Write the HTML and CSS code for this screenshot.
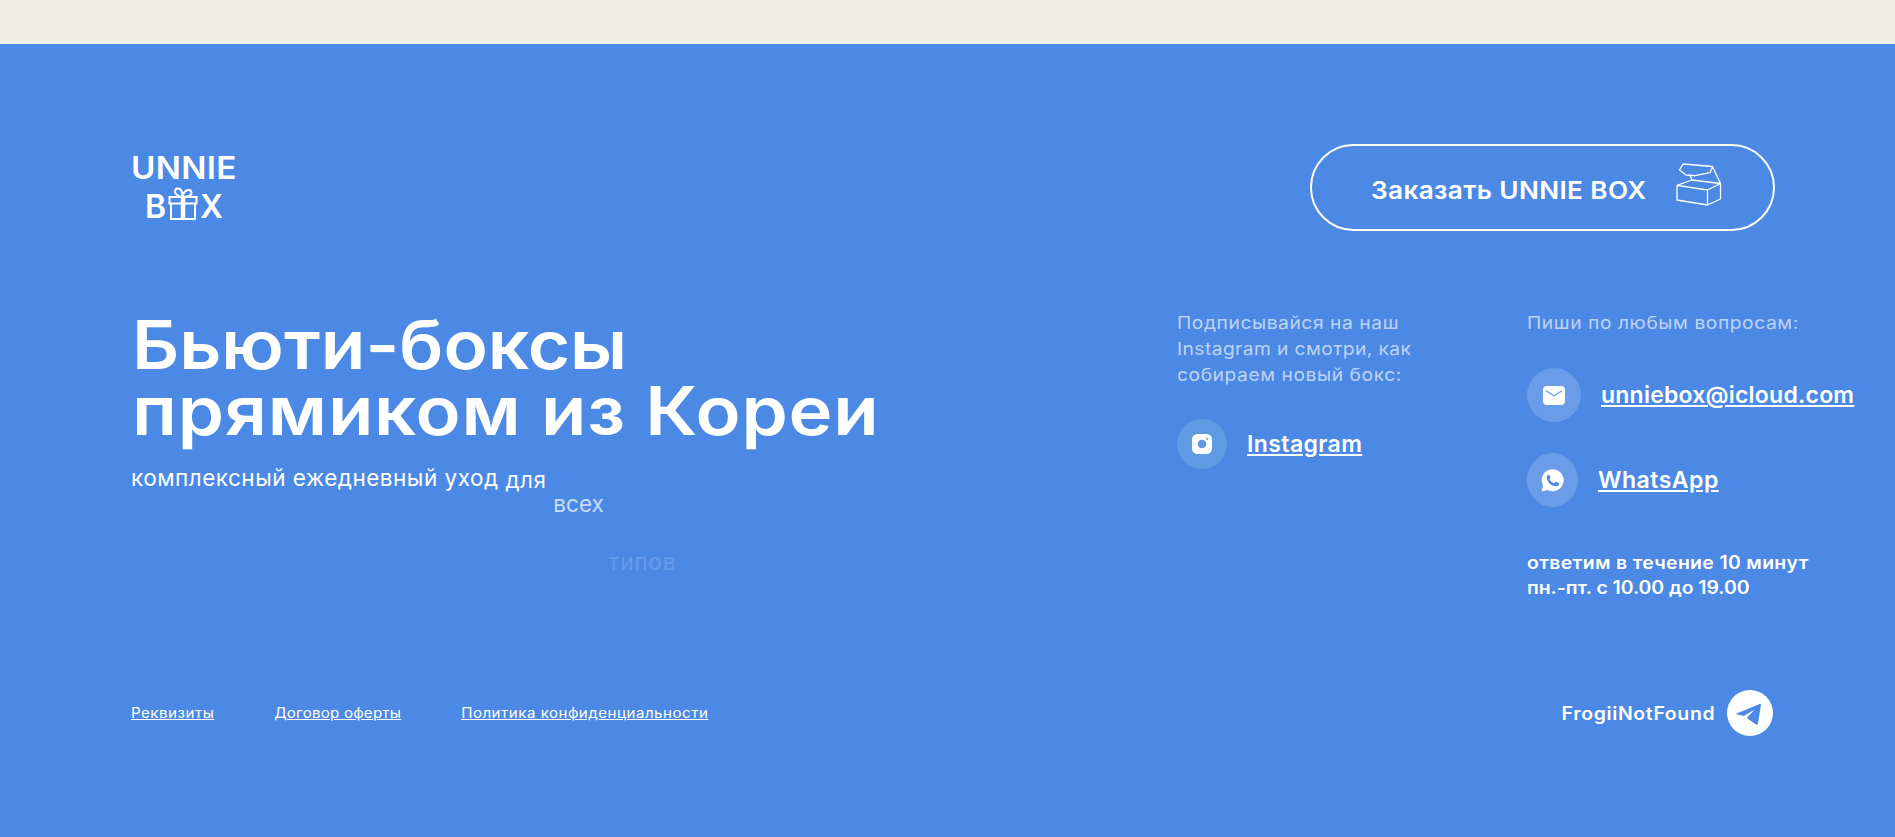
FILE: index.html
```html
<!DOCTYPE html>
<html lang="ru">
  <head>
    <meta charset="utf-8">
    <title>UNNIE BOX</title>
    <link rel="stylesheet" href="styles.css">
  </head>
  <body>
    <footer class="footer">
      <div class="top">
        <div class="logo">
          <div class="logo-line">UNNIE</div>
          <div class="logo-line logo-box">
            <span>B</span>
            <svg width="30" height="34" viewBox="0 0 30 34" fill="none" stroke="#fff" stroke-width="2">
              <path d="M1.500 10h27v6.500h-27zM3 16.500v15.500h24v-15.500"/>
              <path d="M15 10v22" stroke-width="4.500"/>
              <path d="M14.500 10C10 9 6.500 7 7 4c.5-3.500 5-3.300 6.500 0 .9 2 1 4 1 6zM14.500 10c.8-3.800 3-7 6-7 3.800 0 3.800 4.800.8 6-1.800.8-4.300 1-6.800 1z"/>
            </svg>
            <span>X</span>
          </div>
        </div>
        <a class="order" href="#">
          <span>Заказать UNNIE BOX</span>
          <svg width="46" height="44" viewBox="0 0 46 44" fill="none" stroke="#fff" stroke-width="1.300" stroke-linejoin="round">
            <path d="M1 23.300L31.500 28v15L1 38zM31.500 28L44.500 21.500v15.500L31.500 43M1 23.300L16 18l28.500 3.500L36.500 4.500 7 2 3.500 8 10 13l9 .7 15-3 2.500-6.200M14 13.500l2 4.500"/>
          </svg>
        </a>
      </div>

      <div class="middle">
        <div class="about">
          <h2><span class="title-1">Бьюти-боксы</span><br><span class="title-2">прямиком из Кореи</span></h2>
          <p class="lead">
            комплексный ежедневный уход
            <span class="word word-1">для</span>
            <span class="word word-2">всех</span>
            <span class="word word-3">типов</span>
          </p>
        </div>
        <div class="social">
          <p class="note">Подписывайся на наш<br><span class="tight">Instagram и смотри, как</span><br>собираем новый бокс:</p>
          <div class="contact contact-inst">
            <span class="circle">
              <svg width="20" height="20" viewBox="0 0 20 20">
                <rect width="20" height="20" rx="5.500" fill="#fff"/>
                <circle cx="10" cy="10" r="4.300" fill="#5f9be3"/>
                <circle cx="15.200" cy="4.800" r="1" fill="#5f9be3"/>
              </svg>
            </span>
            <a href="#">Instagram</a>
          </div>
        </div>
        <div class="write">
          <p class="note">Пиши по любым вопросам:</p>
          <div class="contact contact-mail">
            <span class="circle">
              <svg width="22" height="19" viewBox="0 0 22 19">
                <rect width="22" height="19" rx="4" fill="#fff"/>
                <path d="M3 4.800l8 5 8-5" fill="none" stroke="#6a9ce9" stroke-width="1.100"/>
              </svg>
            </span>
            <a href="#">unniebox@icloud.com</a>
          </div>
          <div class="contact contact-wa">
            <span class="circle">
              <svg width="23" height="23" viewBox="0 0 23 23">
                <path d="M.5 22.500l1.600-5.800A11 11 0 1 1 6.600 21z" fill="#fff"/>
                <path d="M7.600 5.700c-1.200.3-2 1.500-1.900 3 .5 4.300 4.300 8 8.600 8.600 1.800.2 3.700-.7 3.900-2.400l-.2-.7-3-1.400-.8.200-1.200 1.400c-2.200-.8-3.800-2.300-4.700-4.300l1.200-1.500-1.200-2.700z" fill="#4b89e4"/>
              </svg>
            </span>
            <a href="#">WhatsApp</a>
          </div>
          <p class="hours">ответим в течение 10 минут<br><span class="tight">пн.-пт. с 10.00 до 19.00</span></p>
        </div>
      </div>

      <div class="bottom">
        <nav class="docs">
          <a href="#">Реквизиты</a>
          <a class="tight" href="#">Договор оферты</a>
          <a href="#">Политика конфиденциальности</a>
        </nav>
        <a class="author" href="#">
          <span>FrogiiNotFound</span>
          <svg width="46" height="46" viewBox="0 0 46 46">
            <circle cx="23" cy="23" r="23" fill="#fff"/>
            <path d="M8.500 24L32.500 14c1-.4 1.600.2 1.400 1.200L31 33.500c-.2 1.400-1.200 1.500-2.300.8l-9-6.300 8-8.500-11 6.500z" fill="#4b89e4"/>
          </svg>
        </a>
      </div>
    </footer>
  </body>
</html>
```
FILE: styles.css
```css
body {
  margin: 0;
  background: #f1eee6;
  font-family: Inter, "Liberation Sans", sans-serif;
  color: #fff;
  overflow: hidden;
}
h2, p { margin: 0; }
a { color: #fff; }

.footer {
  box-sizing: border-box;
  height: 793px;
  margin-top: 44px;
  padding: 100px 120px 0 131px;
  background: #4b89e4;
}
.top {
  display: flex;
  justify-content: space-between;
  height: 87px;
}
.logo {
  padding-top: 5px;
  font-size: 31px;
  font-weight: 600;
  line-height: 38px;
}
.logo-line {
  letter-spacing: .3px;
  white-space: nowrap;
  transform: scaleX(1.07);
  transform-origin: left;
}
.logo-box {
  display: flex;
  gap: 2px;
  padding-left: 14px;
  font-size: 32px;
  line-height: 40px;
  letter-spacing: 0;
  transform: none;
}
.order {
  box-sizing: border-box;
  display: flex;
  justify-content: space-between;
  width: 465px;
  height: 87px;
  padding: 18px 51px 0 59px;
  border: 2px solid #fff;
  border-radius: 44px;
  font-size: 24.500px;
  font-weight: 600;
  line-height: 52px;
  letter-spacing: .33px;
  white-space: nowrap;
  text-decoration: none;
}
.order span {
  transform: scaleX(1.07);
  transform-origin: left;
}
.order svg { margin-top: -2px; }

.middle {
  display: grid;
  grid-template-columns: 1046px 350px auto;
  height: 379px;
  padding-top: 80px;
}
h2 {
  padding: 1px 0 0 1px;
  font-size: 67.500px;
  font-weight: 600;
  line-height: 66px;
  white-space: nowrap;
}
.title-1, .title-2 {
  display: inline-block;
  height: 66px;
  transform: scaleX(1.08);
  transform-origin: left;
}
.title-2 { letter-spacing: .7px; transform: scaleX(1.1); }
.lead {
  padding-top: 16px;
  font-size: 22.500px;
  line-height: 36px;
  letter-spacing: .5px;
  white-space: nowrap;
}
.word { display: inline-block; }
.word-1 { transform: translateY(2px); opacity: .95; }
.word-2 { margin-right: -2px; letter-spacing: 0; transform: translateY(26px); opacity: .7; }
.word-3 { letter-spacing: .8px; transform: translateY(84px); opacity: .15; }

.note {
  margin-top: -1px;
  font-size: 17.500px;
  line-height: 26px;
  letter-spacing: .5px;
  color: rgba(255, 255, 255, .65);
  white-space: nowrap;
  transform: scaleX(1.1);
  transform-origin: left;
}
.note .tight { letter-spacing: .36px; }
.contact {
  display: flex;
  align-items: center;
  gap: 20px;
  font-size: 23px;
  font-weight: 600;
}
.circle {
  display: flex;
  align-items: center;
  justify-content: center;
  width: 54px;
  height: 54px;
  border-radius: 50%;
  background: #6a9ce9;
}
.contact-inst { margin-top: 31px; letter-spacing: .4px; }
.contact-inst .circle { width: 50px; height: 50px; background: #5f9be3; }
.contact-mail { margin-top: 32px; letter-spacing: .22px; }
.contact-wa { margin-top: 31px; letter-spacing: .5px; }
.contact-wa .circle { width: 51px; }
.hours {
  padding-top: 43px;
  font-size: 18px;
  font-weight: 600;
  line-height: 25px;
  letter-spacing: .3px;
  white-space: nowrap;
  transform: scaleX(1.08);
  transform-origin: left;
}
.hours .tight { letter-spacing: -.04px; }

.bottom {
  display: flex;
  justify-content: space-between;
  align-items: center;
  padding-right: 2px;
}
.docs {
  display: flex;
  gap: 55.500px;
  margin-top: -2px;
  font-size: 14px;
  letter-spacing: .45px;
  transform: scaleX(1.08);
  transform-origin: left;
}
.docs .tight { letter-spacing: .2px; }
.author {
  display: flex;
  align-items: center;
  gap: 12px;
  font-size: 18px;
  font-weight: 600;
  letter-spacing: .6px;
  text-decoration: none;
}
.author span {
  transform: scaleX(1.08);
  transform-origin: right;
}
```
